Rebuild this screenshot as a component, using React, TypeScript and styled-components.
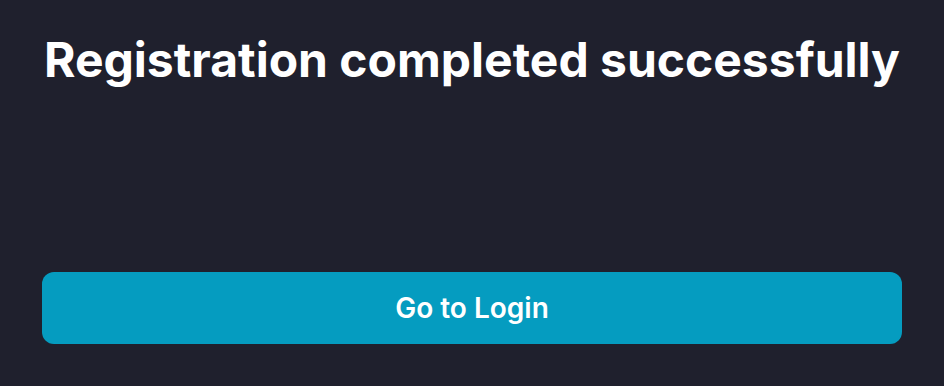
import React from "react";
import styled, { createGlobalStyle } from "styled-components";

const GlobalStyle = createGlobalStyle`
  html, body {
    margin: 0;
    padding: 0;
    background: #1f202d;
  }
  body {
    font-family: Inter, "Noto Sans", sans-serif;
  }
`;

const Page = styled.main`
  display: flex;
  flex-direction: column;
  height: 386px;
  box-sizing: border-box;
  padding: 31px 42px 0;
  background: #1f202d;
`;

const Title = styled.h1`
  margin: 0;
  text-align: center;
  color: #ffffff;
  font-size: 48px;
  font-weight: 700;
  line-height: 58px;
`;

// empty message area between title and action
const Body = styled.div`
  height: 183px;
`;

const PrimaryButton = styled.button`
  display: flex;
  align-items: center;
  justify-content: center;
  width: 100%;
  height: 72px;
  border: none;
  border-radius: 12px;
  background: #059cc0;
  color: #ffffff;
  font-family: Inter, "Noto Sans", sans-serif;
  font-size: 28px;
  font-weight: 600;
  cursor: pointer;
`;

export default function App() {
  return (
    <>
      <GlobalStyle />
      <Page>
        <Title>Registration completed successfully</Title>
        <Body />
        <PrimaryButton>Go to Login</PrimaryButton>
      </Page>
    </>
  );
}
